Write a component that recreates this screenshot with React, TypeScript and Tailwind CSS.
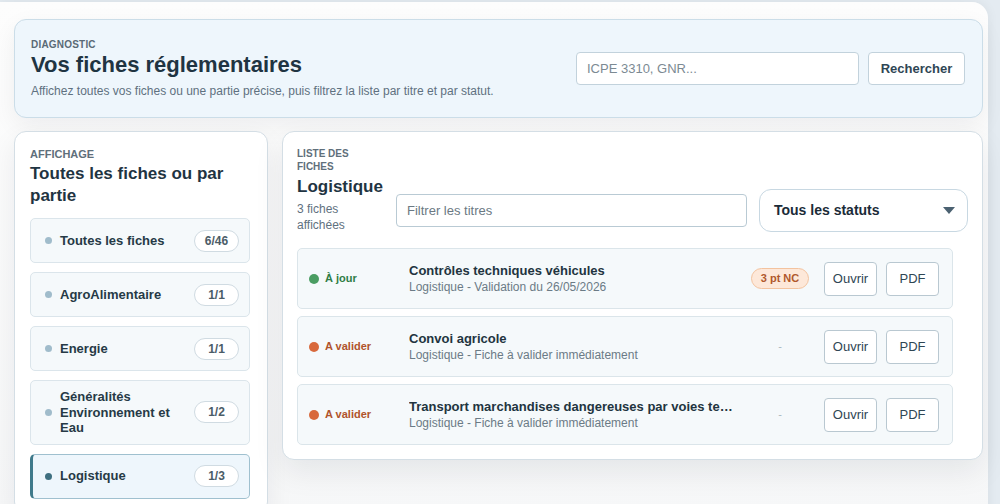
import React from 'react';

const parties = [
  { id: 'all', label: 'Toutes les fiches', count: '6/46' },
  { id: 'agro', label: 'AgroAlimentaire', count: '1/1' },
  { id: 'energie', label: 'Energie', count: '1/1' },
  { id: 'gen', label: 'Généralités Environnement et Eau', count: '1/2' },
  { id: 'log', label: 'Logistique', count: '1/3' },
];

const fiches = [
  {
    statut: 'ok',
    titre: 'Contrôles techniques véhicules',
    sous: 'Logistique - Validation du 26/05/2026',
    nc: '3 pt NC',
  },
  {
    statut: 'todo',
    titre: 'Convoi agricole',
    sous: 'Logistique - Fiche à valider immédiatement',
    nc: null,
  },
  {
    statut: 'todo',
    titre: 'Transport marchandises dangereuses par voies terrestres',
    sous: 'Logistique - Fiche à valider immédiatement',
    nc: null,
  },
];

function Statut({ statut }: { statut: string }) {
  if (statut === 'ok') {
    return (
      <div className="flex items-center gap-[6px]">
        <span className="w-[10px] h-[10px] rounded-full bg-[#4a9d62]" />
        <span className="text-[11px] font-bold text-[#2f7d45]">À jour</span>
      </div>
    );
  }
  return (
    <div className="flex items-center gap-[6px]">
      <span className="w-[10px] h-[10px] rounded-full bg-[#d8693c]" />
      <span className="text-[11px] font-bold text-[#b0542c]">A valider</span>
    </div>
  );
}

export default function App() {
  const actif = 'log';

  return (
    <div
      className="w-[1000px] h-[504px] overflow-hidden bg-[#e4ebf1] text-[#22343f]"
      style={{ fontFamily: '"Liberation Sans", Arial, sans-serif' }}
    >
      <div className="w-[988px] h-[520px] mt-[2px] rounded-tr-2xl bg-gradient-to-b from-[#fdfdfd] to-[#f6f7f8] pl-[14px] pr-[5px] pt-[17px] shadow-[0_0_12px_rgba(15,23,42,0.06)]">
        {/* En-tête */}
        <div className="h-[99px] flex items-center justify-between pl-4 pr-[17px] rounded-xl border border-[#cbdde8] bg-[#eef6fc] shadow-[0_8px_24px_rgba(15,23,42,0.06)]">
          <div>
            <p className="text-[10px] font-bold uppercase tracking-[0.2px] text-[#5a6a76] leading-[13px]">
              Diagnostic
            </p>
            <h1 className="text-[22px] font-bold leading-[28px] text-[#1f3442]">
              Vos fiches réglementaires
            </h1>
            <p className="text-[12px] text-[#5f7180] leading-[16px] mt-[4px]">
              Affichez toutes vos fiches ou une partie précise, puis filtrez la liste par titre et par statut.
            </p>
          </div>
          <div className="flex items-center gap-[9px]">
            <input
              placeholder="ICPE 3310, GNR..."
              className="w-[283px] h-[33px] px-[10px] rounded-[4px] border border-[#c2d2dc] bg-white text-[13px] placeholder:text-[#7c8a93] outline-none"
            />
            <button className="w-[97px] h-[33px] rounded-[4px] border border-[#c2d2dc] bg-white text-[13px] font-bold text-[#2f4654]">
              Rechercher
            </button>
          </div>
        </div>

        <div className="flex gap-[14px] mt-[13px] items-start">
          {/* Affichage */}
          <aside className="w-[254px] shrink-0 rounded-xl border border-[#d4dee5] bg-white px-[15px] pt-[15px] pb-[14px] shadow-[0_10px_28px_rgba(15,23,42,0.07)]">
            <p className="text-[11px] font-bold uppercase text-[#5f6f7b] leading-[14px]">Affichage</p>
            <h2 className="text-[17px] font-bold leading-[22px] text-[#1f3442] mt-[2px]">
              Toutes les fiches ou par partie
            </h2>
            <div className="mt-[11px] flex flex-col gap-[9px]">
              {parties.map((p) => {
                const estActif = p.id === actif;
                return (
                  <button
                    key={p.id}
                    className={`w-[220px] min-h-[45px] flex items-center gap-[8px] py-[8px] pr-[10px] rounded-[5px] border text-left ${
                      estActif
                        ? 'bg-[#eef6fc] border-[#9fc0cf] border-l-[3px] border-l-[#3f7a8b] pl-[12px]'
                        : 'bg-[#f5f9fb] border-[#dbe5eb] pl-[14px]'
                    }`}
                  >
                    <span
                      className={`w-[7px] h-[7px] rounded-full shrink-0 ${
                        estActif ? 'bg-[#3e6f80]' : 'bg-[#a0bccb]'
                      }`}
                    />
                    <span className="flex-1 text-[13px] font-bold leading-[15.5px] text-[#263a46]">{p.label}</span>
                    <span className="w-[45px] h-[22px] shrink-0 flex items-center justify-center rounded-full border border-[#d0dbe2] bg-white text-[12px] font-bold text-[#4b5c67]">
                      {p.count}
                    </span>
                  </button>
                );
              })}
            </div>
          </aside>

          {/* Liste des fiches */}
          <section className="flex-1 min-w-0 rounded-xl border border-[#d4dee5] bg-white px-[14px] pt-[15px] pb-[14px] shadow-[0_12px_30px_rgba(15,23,42,0.08)]">
            <div className="flex items-end gap-[14px]">
              <div className="w-[85px] shrink-0">
                <p className="text-[10px] font-bold uppercase text-[#5f6f7b] leading-[13px]">Liste des fiches</p>
                <h2 className="text-[17px] font-bold leading-[22px] text-[#1f3442] mt-[3px]">Logistique</h2>
                <p className="text-[12px] text-[#5f7180] leading-[16px] mt-[3px]">3 fiches affichées</p>
              </div>
              <div className="flex-1 flex items-center gap-[12px] pb-[1px]">
                <input
                  placeholder="Filtrer les titres"
                  className="flex-1 min-w-0 h-[33px] px-[10px] rounded-[4px] border border-[#b9cad4] bg-white text-[13px] placeholder:text-[#6b7983] outline-none"
                />
                <button className="w-[209px] h-[43px] shrink-0 flex items-center justify-between pl-[14px] pr-[12px] rounded-xl border border-[#c8d8e2] bg-white">
                  <span className="text-[14px] font-bold text-[#1b2b38]">Tous les statuts</span>
                  <svg width="12" height="7" viewBox="0 0 12 7">
                    <path d="M0 0h12L6 7z" fill="#4b6171" />
                  </svg>
                </button>
              </div>
            </div>

            <div className="mt-[15px] mr-[15px] flex flex-col gap-[7px]">
              {fiches.map((f) => (
                <div
                  key={f.titre}
                  className="h-[61px] flex items-center pl-[11px] pr-[13px] rounded-[5px] border border-[#dbe5ea] bg-[#f5f9fb]"
                >
                  <div className="w-[100px] shrink-0">
                    <Statut statut={f.statut} />
                  </div>
                  <div className="flex-1 min-w-0">
                    <p className="text-[13px] font-bold text-[#22343f] leading-[17px] truncate">{f.titre}</p>
                    <p className="text-[12px] text-[#6b7b86] leading-[16px]">{f.sous}</p>
                  </div>
                  <div className="w-[74px] shrink-0 flex justify-center ml-[10px]">
                    {f.nc ? (
                      <span className="h-[21px] px-[9px] flex items-center rounded-full border border-[#f3c39f] bg-[#fde8d9] text-[11px] font-bold text-[#b0582c]">
                        {f.nc}
                      </span>
                    ) : (
                      <span className="text-[11px] text-[#aab7bf]">-</span>
                    )}
                  </div>
                  <div className="flex gap-[9px] ml-[7px]">
                    <button className="w-[53px] h-[34px] rounded-[4px] border border-[#b9c8d1] bg-white text-[13px] text-[#2f4654]">
                      Ouvrir
                    </button>
                    <button className="w-[53px] h-[34px] rounded-[4px] border border-[#b9c8d1] bg-white text-[13px] text-[#2f4654]">
                      PDF
                    </button>
                  </div>
                </div>
              ))}
            </div>
          </section>
        </div>
      </div>
    </div>
  );
}
